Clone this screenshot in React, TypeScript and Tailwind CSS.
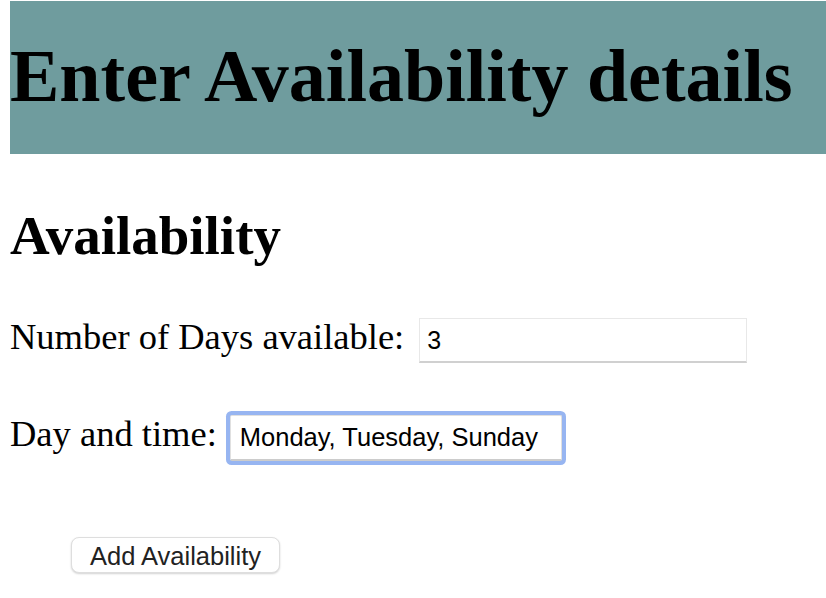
import { useState } from 'react';

export default function App() {
  const [days, setDays] = useState('3');
  const [dayTime, setDayTime] = useState('Monday, Tuesday, Sunday');

  return (
    <div className="min-h-screen bg-white pl-[10px] pb-[20px] font-['Liberation_Serif',serif] text-black">
      <div className="mt-px bg-[#6f9c9e] pt-[35px] pb-[38px]">
        <h1 className="text-[74px] font-bold leading-[80px] whitespace-nowrap">Enter Availability details</h1>
      </div>

      <h2 className="mt-[51px] text-[55px] font-bold leading-[62px]">Availability</h2>

      <div className="mt-[47px] flex items-start">
        <label className="text-[36.5px] leading-[45px] whitespace-nowrap">Number of Days available:</label>
        <input
          value={days}
          onChange={(e) => setDays(e.target.value)}
          className="ml-[15px] mt-[4px] h-[45px] w-[328px] border border-[#e8e8e8] border-b-2 border-b-[#d0d0d0] bg-white pl-[7px] font-['Liberation_Sans',sans-serif] text-[25px] text-black outline-none"
        />
      </div>

      <div className="mt-[48px] flex items-start">
        <label className="text-[36.5px] leading-[45px] whitespace-nowrap">Day and time:</label>
        <input
          value={dayTime}
          onChange={(e) => setDayTime(e.target.value)}
          className="ml-[13px] mt-[4px] h-[46px] w-[332px] rounded-[2px] border border-[#e0e0e0] border-b-2 border-b-[#cccccc] bg-white pl-[9px] font-['Liberation_Sans',sans-serif] text-[25.5px] text-black shadow-[0_0_0_4px_#97b5f1] outline-none"
        />
      </div>

      <button className="ml-[61px] mt-[76px] h-[36px] w-[209px] rounded-[8px] border border-[#dedede] bg-white pt-[3px] font-['Liberation_Sans',sans-serif] text-[25.5px] leading-none text-[#222] shadow-[0_1px_2px_rgba(0,0,0,0.18)]">
        Add Availability
      </button>
    </div>
  );
}
